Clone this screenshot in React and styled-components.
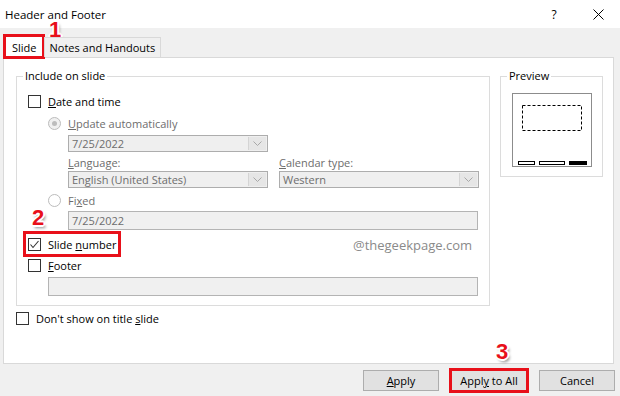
import React from 'react';
import styled, { createGlobalStyle } from 'styled-components';

const GlobalStyle = createGlobalStyle`
  html, body { margin: 0; padding: 0; }
  body {
    font-family: "Open Sans", "Noto Sans", sans-serif;
    font-size: 11px;
    color: #000;
  }
  * { box-sizing: border-box; }
`;

const Dialog = styled.div`
  position: relative;
  width: 620px;
  height: 396px;
  background: #f0f0f0;
  display: flex;
  flex-direction: column;
  overflow: hidden;
`;

const TitleBar = styled.div`
  height: 28px;
  flex-shrink: 0;
  background: #fff;
  display: flex;
  align-items: center;
  padding-left: 5px;
`;

const Title = styled.div`
  flex: 1;
  font-size: 11.5px;
`;

const TitleButton = styled.div`
  width: 44px;
  height: 28px;
  display: flex;
  align-items: center;
  justify-content: center;
  font-size: 12px;
`;

const TabStrip = styled.div`
  height: 29px;
  flex-shrink: 0;
  display: flex;
  align-items: flex-end;
  padding-left: 4px;
  position: relative;
  z-index: 1;
`;

const Tab = styled.div`
  height: ${p => (p.$active ? 23 : 20)}px;
  margin-bottom: ${p => (p.$active ? -1 : 0)}px;
  padding: 0 ${p => (p.$active ? 7 : 5)}px;
  display: flex;
  align-items: center;
  background: ${p => (p.$active ? '#fff' : '#f0f0f0')};
  border: 1px solid #d9d9d9;
  border-bottom: none;
  ${p => p.$active && 'border-right: none;'}
  ${p => p.$highlight && 'outline: 3px solid #e8101a; outline-offset: -2px;'}
`;

const Panel = styled.div`
  height: 307px;
  margin: 0 6px 0 3px;
  background: #fff;
  border: 1px solid #d9d9d9;
  padding: 10px 10px 0 12px;
  display: flex;
  flex-direction: column;
`;

const GroupRow = styled.div`
  display: flex;
  align-items: flex-start;
  gap: 10px;
`;

const GroupBox = styled.fieldset`
  margin: 0;
  padding: 0;
  min-width: 0;
  width: ${p => p.$w}px;
  border: 1px solid #dcdcdc;
`;

const Legend = styled.legend`
  margin-left: 6px;
  padding: 0 2px;
  line-height: 16px;
  font-size: 11px;
`;

const GroupBody = styled.div`
  padding: 9px 0 ${p => p.$pb}px ${p => p.$pl}px;
  display: flex;
  flex-direction: column;
  align-items: flex-start;
`;

const OptionRow = styled.div`
  height: 16px;
  display: flex;
  align-items: center;
  gap: 7px;
  margin-top: ${p => p.$mt || 0}px;
  margin-left: ${p => p.$indent || 0}px;
  color: ${p => (p.$disabled ? '#6d6d6d' : '#000')};
  ${p => p.$highlight && 'outline: 3px solid #e8101a; outline-offset: 2px;'}
`;

const Box = styled.div`
  width: 13px;
  height: 13px;
  flex-shrink: 0;
  border: 1px solid #333;
  background: #fff;
  display: flex;
  align-items: center;
  justify-content: center;
`;

const Radio = styled.div`
  width: 13px;
  height: 13px;
  flex-shrink: 0;
  border-radius: 50%;
  border: 1px solid #bcbcbc;
  background: ${p => (p.$checked ? '#f0f0f0' : '#fff')};
  display: flex;
  align-items: center;
  justify-content: center;
  &::after {
    content: '';
    display: ${p => (p.$checked ? 'block' : 'none')};
    width: 5px;
    height: 5px;
    border-radius: 50%;
    background: #bcbcbc;
  }
`;

const Combo = styled.div`
  width: 200px;
  height: 17px;
  margin-top: ${p => p.$mt || 0}px;
  margin-left: ${p => p.$indent || 0}px;
  border: 1px solid #adadad;
  background: #efefef;
  display: flex;
  align-items: stretch;
  color: #6d6d6d;
`;

const ComboText = styled.div`
  flex: 1;
  padding-left: 3px;
  line-height: 15px;
`;

const ComboArrow = styled.div`
  width: 18px;
  margin: 1px;
  background: #e6e6e6;
  border-left: 1px solid #d4d4d4;
  display: flex;
  align-items: center;
  justify-content: center;
`;

const TextBox = styled.div`
  width: ${p => p.$w}px;
  height: 19px;
  margin-top: ${p => p.$mt || 0}px;
  margin-left: ${p => p.$indent || 0}px;
  border: 1px solid #b4b4b4;
  background: #f0f0f0;
  color: #6d6d6d;
  padding-left: 3px;
  line-height: 17px;
`;

const Columns = styled.div`
  display: flex;
  gap: 11px;
  margin-top: 3px;
  margin-left: 40px;
`;

const Column = styled.div`
  display: flex;
  flex-direction: column;
`;

const FieldLabel = styled.div`
  height: 16px;
  line-height: 16px;
  color: #6d6d6d;
`;

const ButtonRow = styled.div`
  display: flex;
  justify-content: flex-end;
  gap: 12px;
  margin-top: 6px;
  padding-right: 5px;
`;

const Button = styled.div`
  width: 76px;
  height: 21px;
  background: #e1e1e1;
  border: 1px solid #adadad;
  display: flex;
  align-items: center;
  justify-content: center;
  ${p => p.$highlight && 'outline: 3px solid #e8101a; outline-offset: -1px;'}
`;

const Marker = styled.div`
  position: absolute;
  left: ${p => p.$x}px;
  top: ${p => p.$y}px;
  font-family: "Liberation Sans", Arial, sans-serif;
  font-weight: bold;
  font-size: 22px;
  line-height: 16px;
  color: #e8101a;
  text-shadow: -1px -1px 0 #fff, 1px -1px 0 #fff, -1px 1px 0 #fff, 1px 1px 0 #fff,
    0 -2px 0 #fff, 0 2px 0 #fff, -2px 0 0 #fff, 2px 0 0 #fff,
    2px 3px 3px rgba(0, 0, 0, 0.45);
`;

const Watermark = styled.div`
  position: absolute;
  left: 353px;
  top: 236px;
  font-size: 13px;
  color: #8a8a8a;
`;

const Check = () => (
  <svg width="11" height="11" viewBox="0 0 11 11">
    <path d="M1.5 5.5 L4 8.5 L9.5 2" fill="none" stroke="#333" strokeWidth="1.1" />
  </svg>
);

const Chevron = () => (
  <svg width="9" height="5" viewBox="0 0 9 5">
    <path d="M0.5 0.5 L4.5 4.5 L8.5 0.5" fill="none" stroke="#a8a8a8" strokeWidth="1" />
  </svg>
);

const CloseIcon = () => (
  <svg width="11" height="11" viewBox="0 0 11 11">
    <path d="M0.5 0.5 L10.5 10.5 M10.5 0.5 L0.5 10.5" stroke="#000" strokeWidth="1" />
  </svg>
);

const DropDown = ({ value, ...rest }) => (
  <Combo {...rest}>
    <ComboText>{value}</ComboText>
    <ComboArrow><Chevron /></ComboArrow>
  </Combo>
);

const Preview = () => (
  <svg width="80" height="74" viewBox="0 0 80 74" style={{ display: 'block', marginLeft: 11 }}>
    <rect x="0.5" y="0.5" width="79" height="73" fill="#fff" stroke="#8c8c8c" />
    <rect x="10.5" y="12.5" width="59" height="25" fill="none" stroke="#000" strokeDasharray="3 2" />
    <rect x="6.5" y="68.5" width="16" height="3" fill="#fff" stroke="#000" />
    <rect x="27.5" y="68.5" width="25" height="3" fill="#fff" stroke="#000" />
    <rect x="57" y="68" width="18" height="4" fill="#000" />
  </svg>
);

export default function App() {
  return (
    <Dialog>
      <GlobalStyle />
      <TitleBar>
        <Title>Header and Footer</Title>
        <TitleButton>?</TitleButton>
        <TitleButton><CloseIcon /></TitleButton>
      </TitleBar>

      <TabStrip>
        <Tab $active $highlight>Slide</Tab>
        <Tab>Notes and Handouts</Tab>
      </TabStrip>

      <Panel>
        <GroupRow>
          <GroupBox $w={474}>
            <Legend>Include on slide</Legend>
            <GroupBody $pl={11} $pb={9}>
              <OptionRow>
                <Box />
                <span><u>D</u>ate and time</span>
              </OptionRow>
              <OptionRow $mt={6} $indent={20} $disabled>
                <Radio $checked />
                <span><u>U</u>pdate automatically</span>
              </OptionRow>
              <DropDown value="7/25/2022" $mt={4} $indent={40} />
              <Columns>
                <Column>
                  <FieldLabel><u>L</u>anguage:</FieldLabel>
                  <DropDown value="English (United States)" />
                </Column>
                <Column>
                  <FieldLabel><u>C</u>alendar type:</FieldLabel>
                  <DropDown value="Western" />
                </Column>
              </Columns>
              <OptionRow $mt={4} $indent={20} $disabled>
                <Radio />
                <span>Fi<u>x</u>ed</span>
              </OptionRow>
              <TextBox $w={410} $mt={3} $indent={40}>7/25/2022</TextBox>
              <OptionRow $mt={6} $highlight>
                <Box><Check /></Box>
                <span>Slide <u>n</u>umber</span>
              </OptionRow>
              <OptionRow $mt={5}>
                <Box />
                <span><u>F</u>ooter</span>
              </OptionRow>
              <TextBox $w={430} $mt={4} $indent={20} />
            </GroupBody>
          </GroupBox>

          <GroupBox $w={103}>
            <Legend>Preview</Legend>
            <GroupBody $pl={0} $pb={9}>
              <Preview />
            </GroupBody>
          </GroupBox>
        </GroupRow>

        <OptionRow $mt={4}>
          <Box />
          <span>Don't show on title <u>s</u>lide</span>
        </OptionRow>
      </Panel>

      <ButtonRow>
        <Button><span><u>A</u>pply</span></Button>
        <Button $highlight><span>Appl<u>y</u> to All</span></Button>
        <Button>Cancel</Button>
      </ButtonRow>

      <Watermark>@thegeekpage.com</Watermark>
      <Marker $x={49} $y={22}>1</Marker>
      <Marker $x={32} $y={210}>2</Marker>
      <Marker $x={496} $y={344}>3</Marker>
    </Dialog>
  );
}
